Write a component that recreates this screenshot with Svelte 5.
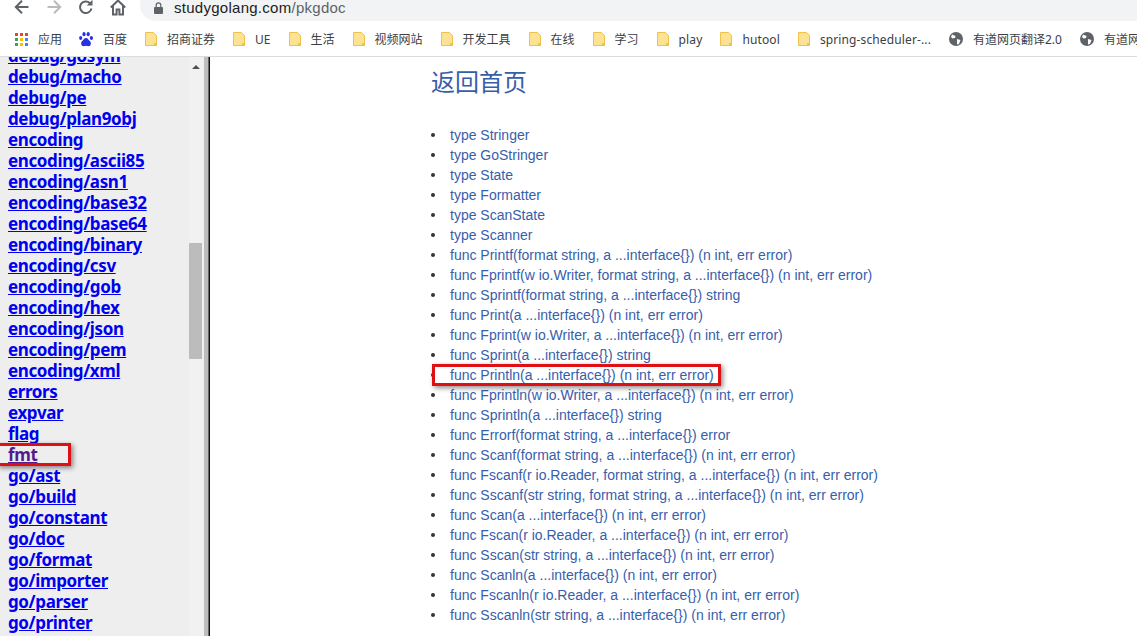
<script>
	const packages = [
		"debug/gosym", "debug/macho", "debug/pe", "debug/plan9obj", "encoding", "encoding/ascii85",
		"encoding/asn1", "encoding/base32", "encoding/base64", "encoding/binary", "encoding/csv",
		"encoding/gob", "encoding/hex", "encoding/json", "encoding/pem", "encoding/xml", "errors",
		"expvar", "flag", "fmt", "go/ast", "go/build", "go/constant", "go/doc", "go/format",
		"go/importer", "go/parser", "go/printer"
	];

	const funcs = [
		"type Stringer", "type GoStringer", "type State", "type Formatter", "type ScanState", "type Scanner",
		"func Printf(format string, a ...interface{}) (n int, err error)",
		"func Fprintf(w io.Writer, format string, a ...interface{}) (n int, err error)",
		"func Sprintf(format string, a ...interface{}) string",
		"func Print(a ...interface{}) (n int, err error)",
		"func Fprint(w io.Writer, a ...interface{}) (n int, err error)",
		"func Sprint(a ...interface{}) string",
		"func Println(a ...interface{}) (n int, err error)",
		"func Fprintln(w io.Writer, a ...interface{}) (n int, err error)",
		"func Sprintln(a ...interface{}) string",
		"func Errorf(format string, a ...interface{}) error",
		"func Scanf(format string, a ...interface{}) (n int, err error)",
		"func Fscanf(r io.Reader, format string, a ...interface{}) (n int, err error)",
		"func Sscanf(str string, format string, a ...interface{}) (n int, err error)",
		"func Scan(a ...interface{}) (n int, err error)",
		"func Fscan(r io.Reader, a ...interface{}) (n int, err error)",
		"func Sscan(str string, a ...interface{}) (n int, err error)",
		"func Scanln(a ...interface{}) (n int, err error)",
		"func Fscanln(r io.Reader, a ...interface{}) (n int, err error)",
		"func Sscanln(str string, a ...interface{}) (n int, err error)"
	];

	const bookmarks = ["招商证券", "UE", "生活", "视频网站", "开发工具", "在线", "学习", "play", "hutool", "spring-scheduler-..."];
</script>

<div class="page">
	<header class="toolbar">
		<svg class="nav" width="16" height="16" viewBox="0 0 16 16" fill="none" stroke="#5f6368" stroke-width="2"><path d="M14.5 8H2M8 1.800 1.800 8 8 14.200"/></svg>
		<svg class="nav" width="16" height="16" viewBox="0 0 16 16" fill="none" stroke="#b9bbbe" stroke-width="2"><path d="M1.500 8H14M8 1.800 14.200 8 8 14.200"/></svg>
		<svg class="nav" width="16" height="16" viewBox="0 0 16 16" fill="none" stroke="#5f6368" stroke-width="2"><path d="M13.500 9.500A5.800 5.800 0 1 1 12 4.200"/><path d="M14.500 .8v5.800H8.700" fill="#5f6368" stroke="none"/></svg>
		<svg class="nav" width="16" height="17" viewBox="0 0 16 17" fill="none" stroke="#5f6368" stroke-width="2"><path d="M.8 8.500 8 1.500l7.200 7M3 7v8.500h3.600v-5h2.800v5H13V7"/></svg>
		<div class="omnibox">
			<svg width="9" height="12" viewBox="0 0 9 12"><path d="M1 5h7a1 1 0 0 1 1 1v5a1 1 0 0 1-1 1H1a1 1 0 0 1-1-1V6a1 1 0 0 1 1-1Z" fill="#5f6368"/><path d="M2.200 5V3.200a2.300 2.300 0 0 1 4.600 0V5" fill="none" stroke="#5f6368" stroke-width="1.200"/></svg>
			<span class="host">studygolang.com</span><span class="path">/pkgdoc</span>
		</div>
	</header>

	<nav class="bookmarks">
		<span class="mark apps">
			<svg width="13" height="13" viewBox="0 0 13 13">
				<rect width="3" height="3" fill="#ea4335"/><rect x="5" width="3" height="3" fill="#ea4335"/><rect x="10" width="3" height="3" fill="#ea4335"/>
				<rect y="5" width="3" height="3" fill="#34a853"/><rect x="5" y="5" width="3" height="3" fill="#fbbc05"/><rect x="10" y="5" width="3" height="3" fill="#4285f4"/>
				<rect y="10" width="3" height="3" fill="#34a853"/><rect x="5" y="10" width="3" height="3" fill="#fbbc05"/><rect x="10" y="10" width="3" height="3" fill="#4285f4"/>
			</svg>
			应用
		</span>
		<span class="mark">
			<svg width="14" height="15" viewBox="0 0 14 15" fill="#2932e1">
				<ellipse cx="1.700" cy="6" rx="1.600" ry="2"/><ellipse cx="5" cy="2.200" rx="1.600" ry="2.100"/><ellipse cx="9.200" cy="2.200" rx="1.600" ry="2.100"/><ellipse cx="12.400" cy="6" rx="1.600" ry="2"/>
				<path d="M7 6c2 0 2.500 2 4 3.200 1.500 1.300 1 5-1.500 5-1 0-1.500-.4-2.500-.4s-1.500.4-2.500.4C2 14.200 1.500 10.500 3 9.200 4.500 8 5 6 7 6Z"/>
			</svg>
			百度
		</span>
		{#each bookmarks as b}
			<span class="mark" class:latin={/^[a-z]/.test(b)}>
				<svg width="12" height="14" viewBox="0 0 12 14"><path d="M.5.500h8l3 3v10H.5Z" fill="#fde293" stroke="#f0c14b"/><path d="M9 11h2.500v2.500H9Z" fill="#f0c14b"/></svg>
				{b}
			</span>
		{/each}
		<span class="mark">
			<svg width="14" height="14" viewBox="0 0 14 14"><circle cx="7" cy="7" r="7" fill="#5f6368"/><path d="M3 2.500 6.500 4 6 6 3.500 6.500 2 5ZM8 7l3.500 1-1.500 4-2 .5Z" fill="#fff"/></svg>
			有道网页翻译2.0
		</span>
		<span class="mark">
			<svg width="14" height="14" viewBox="0 0 14 14"><circle cx="7" cy="7" r="7" fill="#5f6368"/><path d="M3 2.500 6.500 4 6 6 3.500 6.500 2 5ZM8 7l3.500 1-1.500 4-2 .5Z" fill="#fff"/></svg>
			有道网页翻译2.0
		</span>
	</nav>

	<div class="frames">
		<aside class="side">
			<ul class="pkgs">
				{#each packages as p}
					<li><a href="#top" class:visited={p === "fmt"}>{p}</a></li>
				{/each}
			</ul>
			<div class="scrollbar">
				<span class="up"></span>
				<span class="thumb"></span>
			</div>
			<span class="mark-box fmt-box"></span>
		</aside>
		<main class="content">
			<h2>返回首页</h2>
			<ul class="index">
				{#each funcs as f}
					<li><a href="#top">{f}</a></li>
				{/each}
			</ul>
			<span class="mark-box println-box"></span>
		</main>
	</div>
</div>

<style>
	:global(body) {
		margin: 0;
		background: #fff;
	}

	.page {
		width: 1137px;
		height: 636px;
		overflow: hidden;
		display: flex;
		flex-direction: column;
		font-family: "Liberation Sans", "Noto Sans CJK SC", sans-serif;
	}

	.toolbar {
		height: 22px;
		flex: none;
		display: flex;
		align-items: flex-start;
		gap: 16px;
		padding-left: 14px;
		overflow: hidden;
	}

	.nav {
		margin-top: -1px;
		flex: none;
	}

	.omnibox {
		flex: 1;
		height: 32px;
		margin: -11px 0 0 -2px;
		padding: 5px 0 0 14px;
		box-sizing: border-box;
		background: #f1f3f4;
		border-radius: 16px 0 0 16px;
		display: flex;
		align-items: center;
		font-size: 15px;
		letter-spacing: 0.27px;
	}

	.omnibox svg {
		margin-right: 11px;
	}

	.host {
		color: #202124;
	}

	.path {
		color: #5f6368;
	}

	.bookmarks {
		height: 35px;
		flex: none;
		display: flex;
		align-items: center;
		padding-left: 15px;
		box-sizing: border-box;
		border-bottom: 1px solid #dadce0;
		font-family: "Noto Sans", "Noto Sans CJK SC", sans-serif;
		font-size: 12px;
		color: #3c4043;
		white-space: nowrap;
		overflow: hidden;
	}

	.mark {
		flex: none;
		display: flex;
		align-items: center;
		gap: 10px;
		padding-right: 18px;
	}

	.apps {
		padding-right: 17px;
	}

	.latin {
		letter-spacing: 0.12px;
	}

	.frames {
		flex: 1;
		display: flex;
		min-height: 0;
	}

	.side {
		width: 210px;
		flex: none;
		background: #eee;
		position: relative;
		overflow: hidden;
		border-right: 1px solid #111;
		box-sizing: border-box;
	}

	.pkgs {
		list-style: none;
		margin: -12px 0 0;
		padding: 0 0 0 8px;
		font-family: "Noto Sans", sans-serif;
		font-size: 17px;
		font-weight: 700;
		line-height: 21px;
		letter-spacing: -0.38px;
	}

	.pkgs a {
		color: #0000ee;
	}

	.pkgs a.visited {
		color: #551a8b;
	}

	.scrollbar {
		position: absolute;
		left: 189px;
		top: 0;
		bottom: 0;
		width: 20px;
		background: linear-gradient(to right, #f1f1f1 15px, #bdbdbd 15px, #bdbdbd 19px, #666 19px);
	}

	.up {
		position: absolute;
		left: 3px;
		top: 8px;
		border: 4px solid transparent;
		border-top: 0;
		border-bottom: 4px solid #505050;
	}

	.thumb {
		position: absolute;
		left: 0;
		top: 186px;
		width: 13px;
		height: 116px;
		background: #bcbcbc;
	}

	.content {
		flex: 1;
		position: relative;
		padding-left: 221px;
	}

	h2 {
		margin: 10px 0 0;
		font-size: 24px;
		font-weight: 400;
		line-height: 32px;
		color: #375eab;
	}

	.index {
		list-style: none;
		margin: 26px 0 0;
		padding: 0;
		font-size: 14px;
		line-height: 20px;
	}

	.index li {
		display: flex;
		align-items: center;
		gap: 15px;
	}

	.index li::before {
		content: "";
		width: 4px;
		height: 4px;
		border-radius: 50%;
		background: #333;
		flex: none;
	}

	.index a {
		color: #375eab;
		text-decoration: none;
	}

	.mark-box {
		position: absolute;
		border: 3px solid #e00f14;
		box-shadow: 2px 2px 5px rgba(0, 0, 0, 0.45);
		box-sizing: border-box;
	}

	.fmt-box {
		left: -3px;
		top: 386px;
		width: 74px;
		height: 23px;
	}

	.println-box {
		left: 222px;
		top: 307px;
		width: 289px;
		height: 22px;
	}
</style>
